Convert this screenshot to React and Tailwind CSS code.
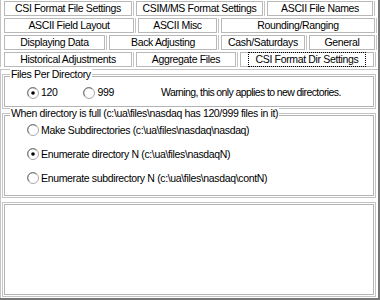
import React from 'react';

const ROWS = [
  [['CSI Format File Settings', 130], ['CSIM/MS Format Settings', 129], ['ASCII File Names', 108]],
  [['ASCII Field Layout', 132], ['ASCII Misc', 81], ['Rounding/Ranging', 156]],
  [['Displaying Data', 103], ['Back Adjusting', 110], ['Cash/Saturdays', 86], ['General', 68]],
  [['Historical Adjustments', 130], ['Aggregate Files', 102], ['CSI Format Dir Settings', 136, true]],
];

const Tab = ({ label, width, active }) => (
  <div className="flex h-[15px] border-r border-[#c4c4c4] pr-[1px]" style={{ width }}>
    <div className="flex-1 flex items-center justify-center border border-[#b8b8b8] bg-white leading-none">
      {active ? (
        <span className="px-[7px] py-[1px] border border-dotted border-black">{label}</span>
      ) : (
        <span>{label}</span>
      )}
    </div>
  </div>
);

const Radio = ({ checked, label, className = '' }) => (
  <div className={`flex items-center gap-[2px] ${className}`}>
    <svg width="12" height="12" viewBox="0 0 12 12">
      <circle cx="6" cy="6" r="5.5" fill="white" stroke="#a8a8a8" />
      <path d="M2.2 9.3 A4.6 4.6 0 0 1 9.3 2.2" fill="none" stroke="#707070" />
      {checked && <circle cx="6" cy="6" r="1.8" fill="black" />}
    </svg>
    <span className="leading-none">{label}</span>
  </div>
);

const Frame = ({ title, className = '', children }) => (
  <div className={`relative border border-[#c4c4c4] p-[1px] ${className}`}>
    <div className="h-full border border-[#b4b4b4]">{children}</div>
    <span className="absolute left-[7px] -top-[6px] bg-white px-[1px] leading-none">{title}</span>
  </div>
);

export default function App() {
  return (
    <div className="w-[380px] h-[300px] bg-white border-r-2 border-b-2 border-[#777] font-['Liberation_Sans',sans-serif] text-[10.5px] text-black tracking-[-0.35px] whitespace-nowrap flex flex-col">
      <div className="flex flex-col gap-[2px] pt-[1px] pl-[3px] border-l border-[#c4c4c4]">
        {ROWS.map((row, i) => (
          <div key={i} className="flex gap-[2px]">
            {row.map(([label, width, active]) => (
              <Tab key={label} label={label} width={width} active={active} />
            ))}
          </div>
        ))}
      </div>
      <div className="flex-1 mt-[2px] border-t border-l border-[#c4c4c4] pt-[4px] pl-[1px] pr-[2px] pb-[1px] flex flex-col gap-[4px]">
        <Frame title="Files Per Directory" className="h-[35px]">
          <div className="flex items-center h-full pl-[22px] pt-[2px]">
            <Radio checked label="120" />
            <Radio label="999" className="ml-[26px]" />
            <span className="ml-[47px] leading-none tracking-[-0.6px]">Warning, this only applies to new directories.</span>
          </div>
        </Frame>
        <Frame title="When directory is full (c:\ua\files\nasdaq has 120/999 files in it)" className="h-[85px]">
          <div className="flex flex-col pl-[22px] pt-[8px] gap-[12px]">
            <Radio label="Make Subdirectories (c:\ua\files\nasdaq\nasdaq)" />
            <Radio checked label="Enumerate directory N (c:\ua\files\nasdaqN)" />
            <Radio label="Enumerate subdirectory N (c:\ua\files\nasdaq\contN)" />
          </div>
        </Frame>
        <div className="flex-1 border border-[#c4c4c4] p-[1px]">
          <div className="h-full border border-[#b4b4b4]" />
        </div>
      </div>
    </div>
  );
}
